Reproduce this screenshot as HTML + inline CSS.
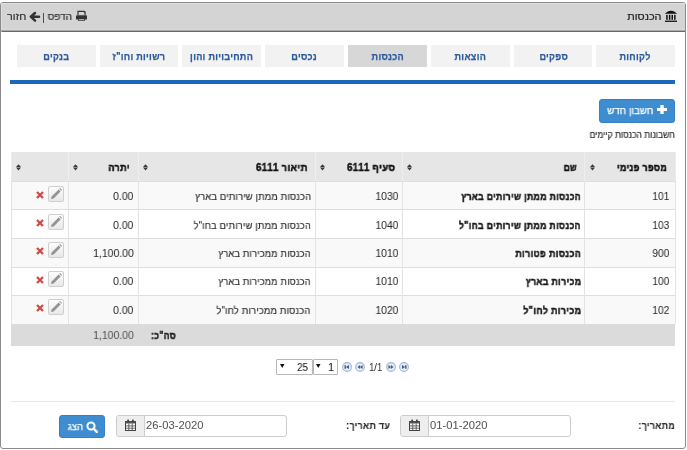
<!DOCTYPE html>
<html><head><meta charset="utf-8">
<style>
*{box-sizing:border-box;margin:0;padding:0}
html,body{width:687px;height:450px;background:#fff;overflow:hidden}
body{font-family:"Liberation Sans",sans-serif;color:#333;position:relative}
.a{position:absolute}
.t{position:absolute;white-space:nowrap;line-height:1;will-change:transform}
</style></head><body>
<div class="a" style="left:0px;top:2px;width:686px;height:447px;background:#fff;border:1px solid #8a8a8a;border-radius:3px;"></div>
<div class="a" style="left:1px;top:3px;width:684px;height:29px;background:#d4d4d4;border-bottom:1px solid #6a6a6a;border-top:1px solid #e0e0e0;border-left:1px solid #e0e0e0;border-radius:2px 2px 0 0;"></div>
<div class="a" style="left:1px;top:30px;width:684px;height:1px;background:#a8a8a8;"></div>
<div class="a" style="left:1px;top:29px;width:684px;height:1px;background:#dadada;"></div>
<svg class="a" style="left:664px;top:10px" width="14" height="12" viewBox="0 0 14 12">
 <path d="M1 3.8 C2 2.2 4.5 0.7 7 0.7 C9.5 0.7 12 2.2 13 3.8 Z" fill="#111"/>
 <rect x="2.2" y="4.8" width="1.5" height="5" fill="#111"/>
 <rect x="4.9" y="4.8" width="1.5" height="5" fill="#111"/>
 <rect x="7.5" y="4.8" width="1.5" height="5" fill="#111"/>
 <rect x="10.1" y="4.8" width="1.5" height="5" fill="#111"/>
 <rect x="1" y="10.6" width="12" height="1.3" fill="#111"/>
</svg>
<div class="t" style="right:26.0px;top:12px;font-size:10.3px;font-weight:normal;color:#222;direction:rtl;transform:scaleX(1.056);transform-origin:right center;-webkit-text-stroke:0.22px #222;">הכנסות</div>
<svg class="a" style="left:75px;top:10px" width="13" height="12" viewBox="0 0 13 12">
 <path d="M3 5 V1.3 H8.8 L10 2.5 V5" fill="none" stroke="#333" stroke-width="1.2"/>
 <path d="M8.6 1 L10.4 2.8 L10.4 1 Z" fill="#333"/>
 <path d="M2 5.2 H11 Q12 5.2 12 6.2 V9.6 H1 V6.2 Q1 5.2 2 5.2 Z" fill="#333"/>
 <path d="M3 9 H10 V10.8 H3 Z" fill="#333"/>
 <rect x="3.8" y="9.3" width="5.4" height="0.8" fill="#ddd"/>
</svg>
<div class="t" style="right:614.7px;top:12px;font-size:10.3px;font-weight:normal;color:#333;direction:rtl;transform:scaleX(0.972);transform-origin:right center;-webkit-text-stroke:0.22px #333;">הדפס</div>
<div class="a" style="left:42.6px;top:13px;width:1.6px;height:10px;background:#5a4b35;"></div>
<svg class="a" style="left:29px;top:11px" width="12" height="12" viewBox="0 0 12 12">
 <path d="M6 2 L1.8 5.7 L6 9.6 M2.5 5.7 H10" stroke="#333" stroke-width="2.5" fill="none" stroke-linecap="round" stroke-linejoin="round"/>
</svg>
<div class="t" style="right:660.8px;top:12px;font-size:10.3px;font-weight:normal;color:#333;direction:rtl;transform:scaleX(1.05);transform-origin:right center;-webkit-text-stroke:0.22px #333;">חזור</div>
<div class="a" style="left:596.4px;top:45px;width:78.8px;height:22px;background:#f2f2f2;"></div>
<div class="t" style="left:596.4px;top:52px;width:78.8px;text-align:center;font-size:10px;font-weight:bold;color:#2f5c9c;-webkit-text-stroke:0.25px #2f5c9c;letter-spacing:0.3px;direction:rtl"><span style="display:inline-block;transform:scaleX(0.91)">לקוחות</span></div>
<div class="a" style="left:513.6px;top:45px;width:78.8px;height:22px;background:#f2f2f2;"></div>
<div class="t" style="left:513.6px;top:52px;width:78.8px;text-align:center;font-size:10px;font-weight:bold;color:#2f5c9c;-webkit-text-stroke:0.25px #2f5c9c;letter-spacing:0.3px;direction:rtl"><span style="display:inline-block;transform:scaleX(0.91)">ספקים</span></div>
<div class="a" style="left:430.8px;top:45px;width:78.8px;height:22px;background:#f2f2f2;"></div>
<div class="t" style="left:430.8px;top:52px;width:78.8px;text-align:center;font-size:10px;font-weight:bold;color:#2f5c9c;-webkit-text-stroke:0.25px #2f5c9c;letter-spacing:0.3px;direction:rtl"><span style="display:inline-block;transform:scaleX(0.91)">הוצאות</span></div>
<div class="a" style="left:348.0px;top:45px;width:78.8px;height:22px;background:#d7d7d7;"></div>
<div class="t" style="left:348.0px;top:52px;width:78.8px;text-align:center;font-size:10px;font-weight:bold;color:#2f5c9c;-webkit-text-stroke:0.25px #2f5c9c;letter-spacing:0.3px;direction:rtl"><span style="display:inline-block;transform:scaleX(0.91)">הכנסות</span></div>
<div class="a" style="left:265.2px;top:45px;width:78.8px;height:22px;background:#f2f2f2;"></div>
<div class="t" style="left:265.2px;top:52px;width:78.8px;text-align:center;font-size:10px;font-weight:bold;color:#2f5c9c;-webkit-text-stroke:0.25px #2f5c9c;letter-spacing:0.3px;direction:rtl"><span style="display:inline-block;transform:scaleX(0.91)">נכסים</span></div>
<div class="a" style="left:182.4px;top:45px;width:78.8px;height:22px;background:#f2f2f2;"></div>
<div class="t" style="left:182.4px;top:52px;width:78.8px;text-align:center;font-size:10px;font-weight:bold;color:#2f5c9c;-webkit-text-stroke:0.25px #2f5c9c;letter-spacing:0.3px;direction:rtl"><span style="display:inline-block;transform:scaleX(0.91)">התחיבויות והון</span></div>
<div class="a" style="left:99.6px;top:45px;width:78.8px;height:22px;background:#f2f2f2;"></div>
<div class="t" style="left:99.6px;top:52px;width:78.8px;text-align:center;font-size:10px;font-weight:bold;color:#2f5c9c;-webkit-text-stroke:0.25px #2f5c9c;letter-spacing:0.3px;direction:rtl"><span style="display:inline-block;transform:scaleX(0.91)">רשויות וחו"ז</span></div>
<div class="a" style="left:16.8px;top:45px;width:78.8px;height:22px;background:#f2f2f2;"></div>
<div class="t" style="left:16.8px;top:52px;width:78.8px;text-align:center;font-size:10px;font-weight:bold;color:#2f5c9c;-webkit-text-stroke:0.25px #2f5c9c;letter-spacing:0.3px;direction:rtl"><span style="display:inline-block;transform:scaleX(0.91)">בנקים</span></div>
<div class="a" style="left:10px;top:80px;width:665px;height:4px;background:#1c68b9;"></div>
<div class="a" style="left:599px;top:99px;width:76px;height:24px;background:#3e8dd0;border:1px solid #3580c2;border-radius:3px;"></div>
<svg class="a" style="left:657px;top:105px" width="10" height="9" viewBox="0 0 10 9">
 <path d="M3.3 0 H6.7 V3 H10 V6 H6.7 V9 H3.3 V6 H0 V3 H3.3 Z" fill="#fff"/></svg>
<div class="t" style="right:33.8px;top:106px;font-size:10px;font-weight:normal;color:#fff;direction:rtl;transform:scaleX(0.974);transform-origin:right center;-webkit-text-stroke:0.25px #fff;">חשבון חדש</div>
<div class="t" style="right:11.7px;top:130.5px;font-size:9.3px;font-weight:normal;color:#333;direction:rtl;transform:scaleX(0.918);transform-origin:right center;-webkit-text-stroke:0.22px #333;">חשבונות הכנסות קיימים</div>
<div class="a" style="left:11px;top:152px;width:664px;height:29px;background:#e6e6e6;"></div>
<div class="a" style="left:11px;top:181px;width:664px;height:28px;background:#f9f9f9;"></div>
<div class="a" style="left:11px;top:181px;width:664px;height:1px;background:#dedede;"></div>
<div class="a" style="left:11px;top:209px;width:664px;height:29px;background:#fff;"></div>
<div class="a" style="left:11px;top:209px;width:664px;height:1px;background:#dedede;"></div>
<div class="a" style="left:11px;top:238px;width:664px;height:29px;background:#f9f9f9;"></div>
<div class="a" style="left:11px;top:238px;width:664px;height:1px;background:#dedede;"></div>
<div class="a" style="left:11px;top:267px;width:664px;height:28px;background:#fff;"></div>
<div class="a" style="left:11px;top:267px;width:664px;height:1px;background:#dedede;"></div>
<div class="a" style="left:11px;top:295px;width:664px;height:29px;background:#f9f9f9;"></div>
<div class="a" style="left:11px;top:295px;width:664px;height:1px;background:#dedede;"></div>
<div class="a" style="left:11px;top:324px;width:664px;height:22px;background:#dbdbdb;"></div>
<div class="a" style="left:11px;top:152px;width:1px;height:29px;background:#eeeeee;"></div>
<div class="a" style="left:11px;top:181px;width:1px;height:143px;background:#e3e3e3;"></div>
<div class="a" style="left:68px;top:152px;width:1px;height:29px;background:#eeeeee;"></div>
<div class="a" style="left:68px;top:181px;width:1px;height:143px;background:#e3e3e3;"></div>
<div class="a" style="left:138px;top:152px;width:1px;height:29px;background:#eeeeee;"></div>
<div class="a" style="left:138px;top:181px;width:1px;height:143px;background:#e3e3e3;"></div>
<div class="a" style="left:315px;top:152px;width:1px;height:29px;background:#eeeeee;"></div>
<div class="a" style="left:315px;top:181px;width:1px;height:143px;background:#e3e3e3;"></div>
<div class="a" style="left:402px;top:152px;width:1px;height:29px;background:#eeeeee;"></div>
<div class="a" style="left:402px;top:181px;width:1px;height:143px;background:#e3e3e3;"></div>
<div class="a" style="left:584px;top:152px;width:1px;height:29px;background:#eeeeee;"></div>
<div class="a" style="left:584px;top:181px;width:1px;height:143px;background:#e3e3e3;"></div>
<div class="a" style="left:675px;top:152px;width:1px;height:29px;background:#eeeeee;"></div>
<div class="a" style="left:675px;top:181px;width:1px;height:143px;background:#e3e3e3;"></div>
<svg class="a" style="left:16px;top:163.5px" width="5" height="7" viewBox="0 0 5 7"><path d="M2.5 0.2 L5 3.1 H0 Z M0 3.6 H5 L2.5 6.5 Z" fill="#3a3a3a"/></svg>
<svg class="a" style="left:73px;top:163.5px" width="5" height="7" viewBox="0 0 5 7"><path d="M2.5 0.2 L5 3.1 H0 Z M0 3.6 H5 L2.5 6.5 Z" fill="#3a3a3a"/></svg>
<svg class="a" style="left:143px;top:163.5px" width="5" height="7" viewBox="0 0 5 7"><path d="M2.5 0.2 L5 3.1 H0 Z M0 3.6 H5 L2.5 6.5 Z" fill="#3a3a3a"/></svg>
<svg class="a" style="left:320px;top:163.5px" width="5" height="7" viewBox="0 0 5 7"><path d="M2.5 0.2 L5 3.1 H0 Z M0 3.6 H5 L2.5 6.5 Z" fill="#3a3a3a"/></svg>
<svg class="a" style="left:407px;top:163.5px" width="5" height="7" viewBox="0 0 5 7"><path d="M2.5 0.2 L5 3.1 H0 Z M0 3.6 H5 L2.5 6.5 Z" fill="#3a3a3a"/></svg>
<svg class="a" style="left:590px;top:163.5px" width="5" height="7" viewBox="0 0 5 7"><path d="M2.5 0.2 L5 3.1 H0 Z M0 3.6 H5 L2.5 6.5 Z" fill="#3a3a3a"/></svg>
<div class="t" style="right:19.7px;top:162.5px;font-size:10px;font-weight:bold;color:#111;direction:rtl;transform:scaleX(0.879);transform-origin:right center;-webkit-text-stroke:0.5px #111;letter-spacing:0.4px;">מספר פנימי</div>
<div class="t" style="right:109.9px;top:162.5px;font-size:10px;font-weight:bold;color:#111;direction:rtl;transform:scaleX(0.831);transform-origin:right center;-webkit-text-stroke:0.5px #111;letter-spacing:0.4px;">שם</div>
<div class="t" style="right:291.9px;top:162.5px;font-size:10px;font-weight:bold;color:#111;direction:rtl;transform:scaleX(0.939);transform-origin:right center;-webkit-text-stroke:0.5px #111;letter-spacing:0.4px;">סעיף 6111</div>
<div class="t" style="right:379.1px;top:162.5px;font-size:10px;font-weight:bold;color:#111;direction:rtl;transform:scaleX(0.944);transform-origin:right center;-webkit-text-stroke:0.5px #111;letter-spacing:0.4px;">תיאור 6111</div>
<div class="t" style="right:556.7px;top:162.5px;font-size:10px;font-weight:bold;color:#111;direction:rtl;transform:scaleX(0.9);transform-origin:right center;-webkit-text-stroke:0.5px #111;letter-spacing:0.4px;">יתרה</div>
<div class="t" style="right:17.6px;top:191px;font-size:11px;font-weight:normal;color:#2a2a2a;direction:rtl;transform:scaleX(0.924);transform-origin:right center;-webkit-text-stroke:0.05px #2a2a2a;">101</div>
<div class="t" style="right:106.0px;top:192px;font-size:10px;font-weight:bold;color:#1a1a1a;direction:rtl;transform:scaleX(0.867);transform-origin:right center;-webkit-text-stroke:0.5px #1a1a1a;letter-spacing:0.4px;">הכנסות ממתן שירותים בארץ</div>
<div class="t" style="right:288.5px;top:191px;font-size:11px;font-weight:normal;color:#2a2a2a;direction:rtl;transform:scaleX(0.94);transform-origin:right center;-webkit-text-stroke:0.05px #2a2a2a;">1030</div>
<div class="t" style="right:376.2px;top:192.3px;font-size:10.3px;font-weight:normal;color:#333;direction:rtl;transform:scaleX(0.898);transform-origin:right center;-webkit-text-stroke:0.22px #333;letter-spacing:0.25px;">הכנסות ממתן שירותים בארץ</div>
<div class="t" style="right:553.1px;top:191px;font-size:11px;font-weight:normal;color:#2a2a2a;direction:rtl;transform:scaleX(0.95);transform-origin:right center;-webkit-text-stroke:0.05px #2a2a2a;">0.00</div>
<div class="a" style="left:48px;top:186px;width:16px;height:16px;border:1px solid #cfcfcf;border-radius:2px;background:linear-gradient(#fdfdfd,#e8e8e8)"></div>
<svg class="a" style="left:50px;top:188px" width="12" height="12" viewBox="0 0 12 12"><path d="M1 11 L1.6 8.4 L8.6 1.4 L10.6 3.4 L3.6 10.4 Z" fill="#939393"/><path d="M9.3 0.7 L10 0 L12 2 L11.3 2.7 Z" fill="#939393"/></svg>
<svg class="a" style="left:36px;top:191px" width="8" height="8" viewBox="0 0 8 8"><path d="M1 1 L7 7 M7 1 L1 7" stroke="#d24a46" stroke-width="2.3"/></svg>
<div class="t" style="right:17.6px;top:219.5px;font-size:11px;font-weight:normal;color:#2a2a2a;direction:rtl;transform:scaleX(0.924);transform-origin:right center;-webkit-text-stroke:0.05px #2a2a2a;">103</div>
<div class="t" style="right:106.0px;top:220.5px;font-size:10px;font-weight:bold;color:#1a1a1a;direction:rtl;transform:scaleX(0.865);transform-origin:right center;-webkit-text-stroke:0.5px #1a1a1a;letter-spacing:0.4px;">הכנסות ממתן שירותים בחו"ל</div>
<div class="t" style="right:288.5px;top:219.5px;font-size:11px;font-weight:normal;color:#2a2a2a;direction:rtl;transform:scaleX(0.94);transform-origin:right center;-webkit-text-stroke:0.05px #2a2a2a;">1040</div>
<div class="t" style="right:376.2px;top:220.8px;font-size:10.3px;font-weight:normal;color:#333;direction:rtl;transform:scaleX(0.896);transform-origin:right center;-webkit-text-stroke:0.22px #333;letter-spacing:0.25px;">הכנסות ממתן שירותים בחו"ל</div>
<div class="t" style="right:553.1px;top:219.5px;font-size:11px;font-weight:normal;color:#2a2a2a;direction:rtl;transform:scaleX(0.95);transform-origin:right center;-webkit-text-stroke:0.05px #2a2a2a;">0.00</div>
<div class="a" style="left:48px;top:214px;width:16px;height:16px;border:1px solid #cfcfcf;border-radius:2px;background:linear-gradient(#fdfdfd,#e8e8e8)"></div>
<svg class="a" style="left:50px;top:216px" width="12" height="12" viewBox="0 0 12 12"><path d="M1 11 L1.6 8.4 L8.6 1.4 L10.6 3.4 L3.6 10.4 Z" fill="#939393"/><path d="M9.3 0.7 L10 0 L12 2 L11.3 2.7 Z" fill="#939393"/></svg>
<svg class="a" style="left:36px;top:219px" width="8" height="8" viewBox="0 0 8 8"><path d="M1 1 L7 7 M7 1 L1 7" stroke="#d24a46" stroke-width="2.3"/></svg>
<div class="t" style="right:17.6px;top:247.5px;font-size:11px;font-weight:normal;color:#2a2a2a;direction:rtl;transform:scaleX(0.924);transform-origin:right center;-webkit-text-stroke:0.05px #2a2a2a;">900</div>
<div class="t" style="right:106.0px;top:248.5px;font-size:10px;font-weight:bold;color:#1a1a1a;direction:rtl;transform:scaleX(0.888);transform-origin:right center;-webkit-text-stroke:0.5px #1a1a1a;letter-spacing:0.4px;">הכנסות פטורות</div>
<div class="t" style="right:288.5px;top:247.5px;font-size:11px;font-weight:normal;color:#2a2a2a;direction:rtl;transform:scaleX(0.94);transform-origin:right center;-webkit-text-stroke:0.05px #2a2a2a;">1010</div>
<div class="t" style="right:376.2px;top:248.8px;font-size:10.3px;font-weight:normal;color:#333;direction:rtl;transform:scaleX(0.89);transform-origin:right center;-webkit-text-stroke:0.22px #333;letter-spacing:0.25px;">הכנסות ממכירות בארץ</div>
<div class="t" style="right:553.1px;top:247.5px;font-size:11px;font-weight:normal;color:#2a2a2a;direction:rtl;transform:scaleX(0.95);transform-origin:right center;-webkit-text-stroke:0.05px #2a2a2a;">1,100.00</div>
<div class="a" style="left:48px;top:242px;width:16px;height:16px;border:1px solid #cfcfcf;border-radius:2px;background:linear-gradient(#fdfdfd,#e8e8e8)"></div>
<svg class="a" style="left:50px;top:244px" width="12" height="12" viewBox="0 0 12 12"><path d="M1 11 L1.6 8.4 L8.6 1.4 L10.6 3.4 L3.6 10.4 Z" fill="#939393"/><path d="M9.3 0.7 L10 0 L12 2 L11.3 2.7 Z" fill="#939393"/></svg>
<svg class="a" style="left:36px;top:247px" width="8" height="8" viewBox="0 0 8 8"><path d="M1 1 L7 7 M7 1 L1 7" stroke="#d24a46" stroke-width="2.3"/></svg>
<div class="t" style="right:17.6px;top:276px;font-size:11px;font-weight:normal;color:#2a2a2a;direction:rtl;transform:scaleX(0.924);transform-origin:right center;-webkit-text-stroke:0.05px #2a2a2a;">100</div>
<div class="t" style="right:106.0px;top:277px;font-size:10px;font-weight:bold;color:#1a1a1a;direction:rtl;transform:scaleX(0.876);transform-origin:right center;-webkit-text-stroke:0.5px #1a1a1a;letter-spacing:0.4px;">מכירות בארץ</div>
<div class="t" style="right:288.5px;top:276px;font-size:11px;font-weight:normal;color:#2a2a2a;direction:rtl;transform:scaleX(0.94);transform-origin:right center;-webkit-text-stroke:0.05px #2a2a2a;">1010</div>
<div class="t" style="right:376.2px;top:277.3px;font-size:10.3px;font-weight:normal;color:#333;direction:rtl;transform:scaleX(0.89);transform-origin:right center;-webkit-text-stroke:0.22px #333;letter-spacing:0.25px;">הכנסות ממכירות בארץ</div>
<div class="t" style="right:553.1px;top:276px;font-size:11px;font-weight:normal;color:#2a2a2a;direction:rtl;transform:scaleX(0.95);transform-origin:right center;-webkit-text-stroke:0.05px #2a2a2a;">0.00</div>
<div class="a" style="left:48px;top:271px;width:16px;height:16px;border:1px solid #cfcfcf;border-radius:2px;background:linear-gradient(#fdfdfd,#e8e8e8)"></div>
<svg class="a" style="left:50px;top:273px" width="12" height="12" viewBox="0 0 12 12"><path d="M1 11 L1.6 8.4 L8.6 1.4 L10.6 3.4 L3.6 10.4 Z" fill="#939393"/><path d="M9.3 0.7 L10 0 L12 2 L11.3 2.7 Z" fill="#939393"/></svg>
<svg class="a" style="left:36px;top:276px" width="8" height="8" viewBox="0 0 8 8"><path d="M1 1 L7 7 M7 1 L1 7" stroke="#d24a46" stroke-width="2.3"/></svg>
<div class="t" style="right:17.6px;top:304.5px;font-size:11px;font-weight:normal;color:#2a2a2a;direction:rtl;transform:scaleX(0.924);transform-origin:right center;-webkit-text-stroke:0.05px #2a2a2a;">102</div>
<div class="t" style="right:106.0px;top:305.5px;font-size:10px;font-weight:bold;color:#1a1a1a;direction:rtl;transform:scaleX(0.888);transform-origin:right center;-webkit-text-stroke:0.5px #1a1a1a;letter-spacing:0.4px;">מכירות לחו"ל</div>
<div class="t" style="right:288.5px;top:304.5px;font-size:11px;font-weight:normal;color:#2a2a2a;direction:rtl;transform:scaleX(0.94);transform-origin:right center;-webkit-text-stroke:0.05px #2a2a2a;">1020</div>
<div class="t" style="right:376.2px;top:305.8px;font-size:10.3px;font-weight:normal;color:#333;direction:rtl;transform:scaleX(0.9);transform-origin:right center;-webkit-text-stroke:0.22px #333;letter-spacing:0.25px;">הכנסות ממכירות לחו"ל</div>
<div class="t" style="right:553.1px;top:304.5px;font-size:11px;font-weight:normal;color:#2a2a2a;direction:rtl;transform:scaleX(0.95);transform-origin:right center;-webkit-text-stroke:0.05px #2a2a2a;">0.00</div>
<div class="a" style="left:48px;top:299px;width:16px;height:16px;border:1px solid #cfcfcf;border-radius:2px;background:linear-gradient(#fdfdfd,#e8e8e8)"></div>
<svg class="a" style="left:50px;top:301px" width="12" height="12" viewBox="0 0 12 12"><path d="M1 11 L1.6 8.4 L8.6 1.4 L10.6 3.4 L3.6 10.4 Z" fill="#939393"/><path d="M9.3 0.7 L10 0 L12 2 L11.3 2.7 Z" fill="#939393"/></svg>
<svg class="a" style="left:36px;top:304px" width="8" height="8" viewBox="0 0 8 8"><path d="M1 1 L7 7 M7 1 L1 7" stroke="#d24a46" stroke-width="2.3"/></svg>
<div class="t" style="right:553.1px;top:329.5px;font-size:11px;font-weight:normal;color:#555;direction:rtl;transform:scaleX(0.95);transform-origin:right center;-webkit-text-stroke:0.05px #555;">1,100.00</div>
<div class="t" style="right:511.1px;top:331px;font-size:10px;font-weight:bold;color:#222;direction:rtl;transform:scaleX(0.866);transform-origin:right center;-webkit-text-stroke:0.5px #222;letter-spacing:0.4px;">סה"כ:</div>
<div class="a" style="left:276px;top:359px;width:36.5px;height:15.5px;background:#fff;border:1px solid #b8b8b8;border-radius:1px;"></div>
<div class="a" style="left:312.5px;top:359px;width:25px;height:15.5px;background:#fff;border:1px solid #b8b8b8;border-radius:1px;"></div>
<div class="t" style="left:297.3px;top:361.5px;font-size:11px;font-weight:normal;color:#222;direction:ltr;transform:scaleX(0.91);transform-origin:left center;-webkit-text-stroke:0.05px #222;">25</div>
<div class="t" style="left:328px;top:361.5px;font-size:11px;font-weight:normal;color:#222;direction:ltr;-webkit-text-stroke:0.05px #222;">1</div>
<svg class="a" style="left:280px;top:364px" width="4.5" height="4" viewBox="0 0 4.5 4"><path d="M0 0 H4.5 L2.25 4 Z" fill="#111"/></svg>
<svg class="a" style="left:316px;top:364px" width="4.5" height="4" viewBox="0 0 4.5 4"><path d="M0 0 H4.5 L2.25 4 Z" fill="#111"/></svg>
<div class="t" style="left:369px;top:362px;font-size:11px;font-weight:normal;color:#333;direction:ltr;transform:scaleX(0.864);transform-origin:left center;-webkit-text-stroke:0.05px #333;">1/1</div>
<svg class="a" style="left:341.5px;top:362px" width="10" height="10" viewBox="0 0 10 10"><circle cx="5" cy="5" r="4.4" fill="#e2ebf8" stroke="#a9b8cb" stroke-width="1.1"/><path d="M3.2 3.2 V6.8" stroke="#3f5f8f" stroke-width="1.4"/><path d="M7 3 L3.9 5 L7 7 Z" fill="#3f5f8f"/></svg>
<svg class="a" style="left:354.5px;top:362px" width="10" height="10" viewBox="0 0 10 10"><circle cx="5" cy="5" r="4.4" fill="#e2ebf8" stroke="#a9b8cb" stroke-width="1.1"/><path d="M5.1 3 L2.5 5 L5.1 7 Z M7.6 3 L5 5 L7.6 7 Z" fill="#3f5f8f"/></svg>
<svg class="a" style="left:385.5px;top:362px" width="10" height="10" viewBox="0 0 10 10"><circle cx="5" cy="5" r="4.4" fill="#e2ebf8" stroke="#a9b8cb" stroke-width="1.1"/><path d="M2.4 3 L5 5 L2.4 7 Z M4.9 3 L7.5 5 L4.9 7 Z" fill="#3f5f8f"/></svg>
<svg class="a" style="left:399px;top:362px" width="10" height="10" viewBox="0 0 10 10"><circle cx="5" cy="5" r="4.4" fill="#e2ebf8" stroke="#a9b8cb" stroke-width="1.1"/><path d="M6.8 3.2 V6.8" stroke="#3f5f8f" stroke-width="1.4"/><path d="M3 3 L6.1 5 L3 7 Z" fill="#3f5f8f"/></svg>
<div class="a" style="left:10px;top:401px;width:665px;height:1px;background:#eaeaea;"></div>
<div class="t" style="right:12.2px;top:420.7px;font-size:10px;font-weight:bold;color:#2a2a2a;direction:rtl;transform:scaleX(0.892);transform-origin:right center;-webkit-text-stroke:0.1px #2a2a2a;letter-spacing:0.3px;">מתאריך:</div>
<div class="a" style="left:400px;top:415px;width:171px;height:22px;background:#fff;border:1px solid #ccc;border-radius:3px;"></div>
<div class="a" style="left:401px;top:416px;width:28px;height:20px;background:#eee;border-right:1px solid #ccc;border-radius:2px 0 0 2px;"></div>
<svg class="a" style="left:409px;top:419px" width="11" height="12" viewBox="0 0 11 12"><rect x="0.5" y="2.5" width="10" height="9" fill="#fff" stroke="#444" stroke-width="1"/><rect x="0.5" y="2.5" width="10" height="2" fill="#555"/><rect x="2.2" y="0.5" width="1.8" height="2.8" rx="0.6" fill="#444"/><rect x="7" y="0.5" width="1.8" height="2.8" rx="0.6" fill="#444"/><path d="M0.5 6.9 H10.5 M0.5 9.2 H10.5 M3.8 4.5 V11 M7.2 4.5 V11" stroke="#444" stroke-width="0.8"/></svg>
<div class="t" style="left:430px;top:420px;font-size:11px;font-weight:normal;color:#555;direction:ltr;transform:scaleX(1.02);transform-origin:left center;-webkit-text-stroke:0.05px #555;">01-01-2020</div>
<div class="t" style="right:296.7px;top:420.7px;font-size:10px;font-weight:bold;color:#2a2a2a;direction:rtl;transform:scaleX(0.896);transform-origin:right center;-webkit-text-stroke:0.1px #2a2a2a;letter-spacing:0.3px;">עד תאריך:</div>
<div class="a" style="left:116px;top:415px;width:171px;height:22px;background:#fff;border:1px solid #ccc;border-radius:3px;"></div>
<div class="a" style="left:117px;top:416px;width:28px;height:20px;background:#eee;border-right:1px solid #ccc;border-radius:2px 0 0 2px;"></div>
<svg class="a" style="left:125px;top:419px" width="11" height="12" viewBox="0 0 11 12"><rect x="0.5" y="2.5" width="10" height="9" fill="#fff" stroke="#444" stroke-width="1"/><rect x="0.5" y="2.5" width="10" height="2" fill="#555"/><rect x="2.2" y="0.5" width="1.8" height="2.8" rx="0.6" fill="#444"/><rect x="7" y="0.5" width="1.8" height="2.8" rx="0.6" fill="#444"/><path d="M0.5 6.9 H10.5 M0.5 9.2 H10.5 M3.8 4.5 V11 M7.2 4.5 V11" stroke="#444" stroke-width="0.8"/></svg>
<div class="t" style="left:146px;top:420px;font-size:11px;font-weight:normal;color:#555;direction:ltr;transform:scaleX(1.02);transform-origin:left center;-webkit-text-stroke:0.05px #555;">26-03-2020</div>
<div class="a" style="left:59px;top:415px;width:46px;height:23px;background:#3e8dd0;border:1px solid #3580c2;border-radius:3px;"></div>
<svg class="a" style="left:85.5px;top:420.5px" width="12" height="12" viewBox="0 0 12 12"><circle cx="5" cy="5" r="3.6" fill="none" stroke="#fff" stroke-width="2"/><path d="M7.5 7.5 L10.8 10.8" stroke="#fff" stroke-width="2.4" stroke-linecap="round"/></svg>
<div class="t" style="right:604.3px;top:422px;font-size:10px;font-weight:normal;color:#fff;direction:rtl;transform:scaleX(0.95);transform-origin:right center;-webkit-text-stroke:0.25px #fff;">הצג</div>
</body></html>
